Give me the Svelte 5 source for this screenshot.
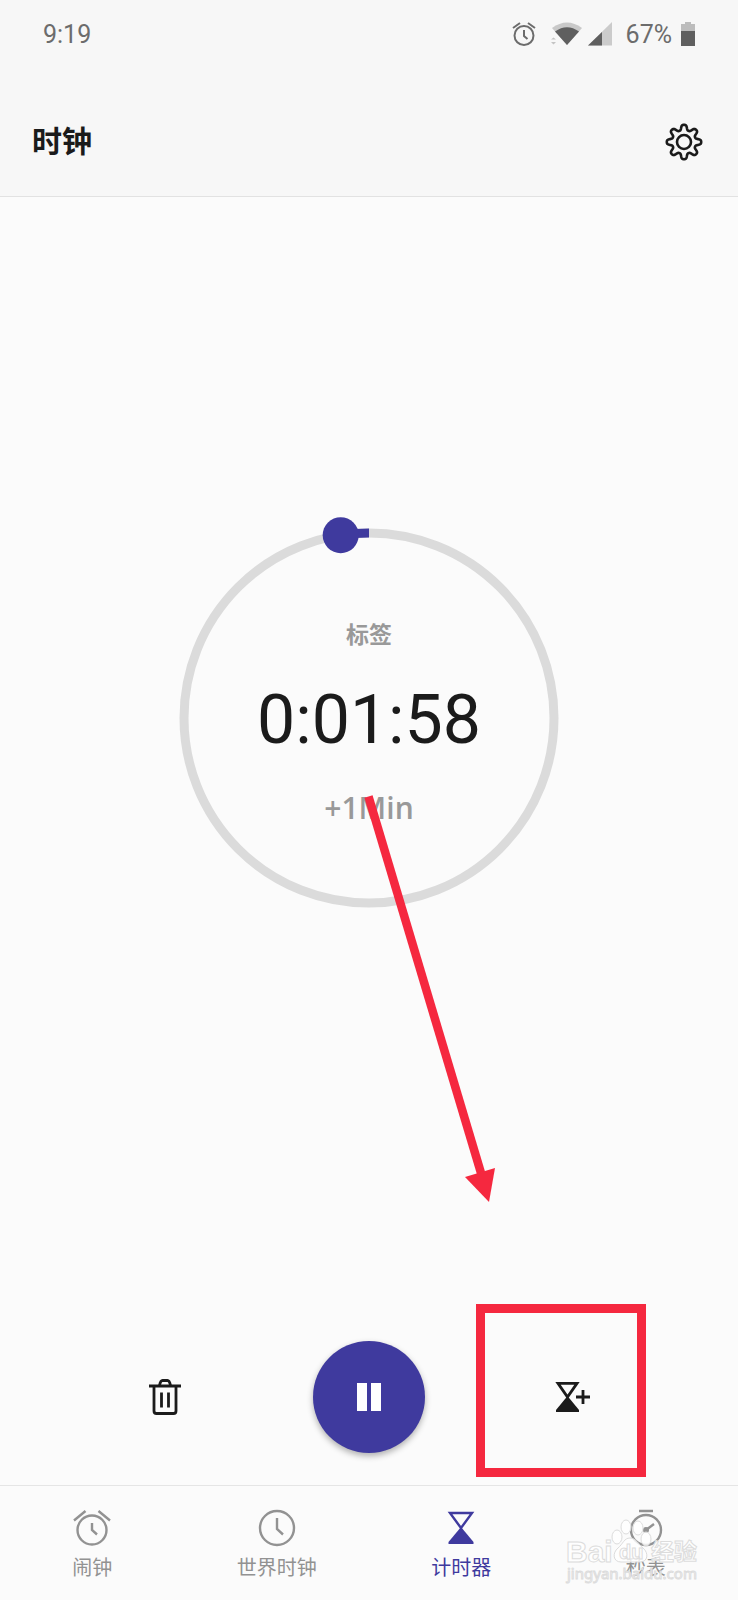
<script lang="ts">
  const tabs = [
    { id: 'alarm', label: '闹钟' },
    { id: 'world', label: '世界时钟' },
    { id: 'timer', label: '计时器' },
    { id: 'stopwatch', label: '秒表' },
  ]
  let active = $state('timer')
  let elapsed = 8.8
  let remaining = $state(118)

  // the knob travels anticlockwise from the top of the ring
  const R = 185
  const angle = (elapsed * Math.PI) / 180
  const knobX = 190 - R * Math.sin(angle)
  const knobY = 190 - R * Math.cos(angle)

  // eight rounded teeth
  const gear = Array.from({ length: 160 }, (_, i) => {
    const a = (i * Math.PI) / 80
    const r = 14.6 + (2.6 * Math.tanh(1.6 * Math.cos(8 * a))) / Math.tanh(1.6)
    return `${(r * Math.cos(a)).toFixed(2)},${(r * Math.sin(a)).toFixed(2)}`
  }).join(' ')

  const pad = (n: number) => String(n).padStart(2, '0')
  const time = $derived(
    `${Math.floor(remaining / 3600)}:${pad(Math.floor(remaining / 60) % 60)}:${pad(remaining % 60)}`
  )
</script>

<div class="screen">
  <div class="status">
    <span>9:19</span>
    <div class="status-icons">
      <svg class="s-alarm" width="24" height="24" viewBox="0 0 24 24" fill="none" stroke="#6c6c6c" stroke-width="2">
        <circle cx="12" cy="13.5" r="9.5" />
        <path d="M12 8v6l3.5 3M1 6l7-5M23 6l-7-5" />
      </svg>
      <svg class="s-wifi" width="34" height="24" viewBox="0 0 34 24">
        <path d="M2 6Q17-5 32 6L17 23z" fill="#c9c9c9" />
        <path d="M5 9.500Q17 1 29 9.500L17 23z" fill="#5f5f5f" />
        <path d="M1 17.500l2.500-2 2.500 2zM1 20h5l-2.500 2.500z" fill="#c4c4c4" />
      </svg>
      <svg class="s-signal" width="24" height="24" viewBox="0 0 24 24">
        <path d="M0 23.500L24 0v23.500z" fill="#cbcbcb" />
        <path d="M0 23.500L14 10v13.500z" fill="#5f5f5f" />
      </svg>
      <span class="percent">67%</span>
      <svg width="16" height="26" viewBox="0 0 16 26">
        <path d="M1 3h4V1h6v2h4v8H1z" fill="#bcbcbc" />
        <path d="M1 10h14v15H1z" fill="#5f5f5f" />
      </svg>
    </div>
  </div>

  <header>
    <h1>时钟</h1>
    <button class="icon" aria-label="设置">
      <svg width="38" height="38" viewBox="-19 -19 38 38" fill="none" stroke="#1b1b1b" stroke-width="2.600" stroke-linejoin="round">
        <circle r="7" />
        <polygon points={gear} />
      </svg>
    </button>
  </header>

  <main>
    <section class="dial-area">
      <div class="dial">
        <svg class="ring" viewBox="0 0 380 380" fill="none">
          <circle cx="190" cy="190" r={R} stroke="#dbdbdb" stroke-width="9" />
          <path d={`M190 5A${R} ${R} 0 0 0 ${knobX} ${knobY}`} stroke="#3f3a9e" stroke-width="9" />
          <circle cx={knobX} cy={knobY} r="18" fill="#3f3a9e" />
        </svg>
        <button class="tag">标签</button>
        <div class="time">{time}</div>
        <button class="plus" onclick={() => (remaining += 60)}>+1Min</button>
        <svg class="arrow" width="130" height="410" viewBox="0 0 130 410">
          <path d="M4.500 1.500L117 378" stroke="#f5283f" stroke-width="8.500" fill="none" />
          <path d="M101 382L131 373L125 407z" fill="#f5283f" />
        </svg>
      </div>
    </section>

    <section class="controls">
      <button class="round" aria-label="删除">
        <svg width="32" height="36" viewBox="0 0 32 36" fill="none" stroke="#1b1b1b" stroke-width="2.800">
          <path d="M0 7h32M5 7v25q0 2.500 2.500 2.500h17q2.500 0 2.500-2.500V7" />
          <path d="M10.500 6.500q1-5 3-5h5q2 0 3 5M12.500 13.500v15M19.500 13.500v15" />
        </svg>
      </button>
      <button class="round pause" aria-label="暂停">
        <svg width="24" height="28" viewBox="0 0 24 28" fill="#fff">
          <path d="M0 0h10v28H0zM14 0h10v28H14z" />
        </svg>
      </button>
      <button class="round add" aria-label="添加计时器">
        <svg width="36" height="32" viewBox="0 0 36 32" fill="none" stroke="#1b1b1b" stroke-width="2.800">
          <path d="M3 2.300h19L12.500 16z" />
          <path d="M12.500 15L1 29v2h23v-2z" fill="#1b1b1b" stroke="none" />
          <path d="M21 16h14M28 9v14" />
        </svg>
        <span class="mark"></span>
      </button>
    </section>
  </main>

  <nav>
    {#each tabs as tab}
      <button class="tab" class:active={active === tab.id} onclick={() => (active = tab.id)}>
        <svg width="40" height="38" viewBox="0 0 40 38" fill="none" stroke="currentColor" stroke-width="2.400">
          {#if tab.id === 'alarm'}
            <circle cx="20" cy="21" r="14.500" />
            <path d="M20 14v7l5 4.500M2 11.500L13.500 2M38 11.500L26.500 2" />
          {:else if tab.id === 'world'}
            <circle cx="20" cy="19" r="17" />
            <path d="M20 9v11l6 5.500" />
          {:else if tab.id === 'timer'}
            <path d="M9 4h22L20 19z" />
            <path d="M20 18L7.500 33v2h25v-2z" fill="currentColor" stroke="none" />
          {:else}
            <circle cx="20" cy="21" r="15" />
            <path d="M13 2h14M20 21l8-6" />
            <circle cx="20" cy="21" r="3" fill="currentColor" stroke="none" />
          {/if}
        </svg>
        <span>{tab.label}</span>
      </button>
    {/each}
    <svg class="watermark" width="140" height="70" viewBox="0 0 140 70">
      <g fill="#fff" fill-opacity="0.800" stroke="#dcdcdc" stroke-width="1">
        <ellipse cx="56" cy="21" rx="5" ry="7" />
        <ellipse cx="65" cy="11" rx="5" ry="7" />
        <ellipse cx="77" cy="12" rx="5" ry="7" />
        <ellipse cx="85" cy="23" rx="5" ry="7" />
        <path d="M69 22c6 0 8 6 13 10 6 5 5 14-3 14H60c-8 0-9-9-3-14 5-4 6-10 12-10z" />
        <text x="5" y="46" class="wm-latin">Bai</text>
        <text x="58" y="43" class="wm-du">du</text>
        <text x="90" y="44" class="wm-cjk">经验</text>
        <text x="6" y="63" class="wm-url">jingyan.baidu.com</text>
      </g>
    </svg>
  </nav>
</div>

<style>
  :global(body) {
    background: #fbfbfb;
  }

  .screen {
    min-height: 100vh;
    display: flex;
    flex-direction: column;
    font-family: Roboto, "Noto Sans CJK SC", sans-serif;
    color: #1b1b1b;
  }

  button {
    border: 0;
    padding: 0;
    background: none;
    color: inherit;
    font-family: inherit;
    cursor: pointer;
  }

  svg {
    display: block;
  }

  .status {
    height: 68px;
    padding: 0 42px 0 43px;
    display: flex;
    align-items: center;
    justify-content: space-between;
    background: #f7f7f7;
    color: #6c6c6c;
    font-size: 25px;
  }

  .status-icons {
    display: flex;
    align-items: center;
  }

  .s-alarm {
    margin-right: 14px;
  }

  .s-wifi {
    margin-right: 4px;
  }

  .percent {
    margin: 0 8px 0 14px;
  }

  header {
    height: 129px;
    padding: 20px 35px 0 32px;
    display: flex;
    align-items: center;
    justify-content: space-between;
    box-sizing: border-box;
    background: #f7f7f7;
    border-bottom: 1px solid #e2e2e2;
  }

  h1 {
    margin: 0;
    font-size: 30px;
    line-height: 40px;
    font-weight: 700;
  }

  main {
    flex: 1;
    display: flex;
    flex-direction: column;
  }

  .dial-area {
    flex: 1;
    display: flex;
    align-items: center;
    justify-content: center;
    padding-bottom: 102px;
  }

  .dial {
    position: relative;
    width: 380px;
    height: 380px;
    padding-top: 8px;
    box-sizing: border-box;
    display: flex;
    flex-direction: column;
    align-items: center;
    justify-content: center;
    gap: 24px;
  }

  .ring {
    position: absolute;
    inset: 0;
    overflow: visible;
  }

  .tag,
  .plus {
    z-index: 1;
    color: #999;
    line-height: 40px;
  }

  .tag {
    font-size: 23px;
    font-weight: 700;
  }

  .time {
    font-size: 68px;
    line-height: 80px;
  }

  .plus {
    margin-top: 4px;
    font-family: "Open Sans", "Noto Sans", sans-serif;
    font-size: 30px;
    font-weight: 600;
  }

  .arrow {
    position: absolute;
    z-index: 2;
    left: 185px;
    top: 267px;
    overflow: visible;
    pointer-events: none;
  }

  .controls {
    display: flex;
    justify-content: center;
    gap: 92px;
    padding-bottom: 32px;
  }

  .round {
    position: relative;
    width: 112px;
    height: 112px;
    border-radius: 50%;
    display: flex;
    align-items: center;
    justify-content: center;
  }

  .pause {
    background: #3f3a9e;
    box-shadow: 0 3px 6px rgba(0, 0, 0, 0.3);
  }

  .mark {
    position: absolute;
    left: -41px;
    top: -37px;
    width: 170px;
    height: 173px;
    box-sizing: border-box;
    border: 9px solid #f5283f;
  }

  nav {
    position: relative;
    display: grid;
    grid-template-columns: repeat(4, 1fr);
    border-top: 1px solid #e5e5e5;
  }

  .tab {
    display: flex;
    flex-direction: column;
    align-items: center;
    gap: 6px;
    padding: 23px 0 17px;
    color: #929292;
    font-size: 20px;
    line-height: 30px;
  }

  .active {
    color: #3f3a9e;
  }

  .watermark {
    position: absolute;
    right: 37px;
    bottom: 14px;
    pointer-events: none;
  }

  .wm-latin {
    font: 700 30px "Liberation Sans", sans-serif;
  }

  .wm-du {
    font: 700 20px "Liberation Sans", sans-serif;
  }

  .wm-cjk {
    font: 700 23px "Noto Sans CJK SC", sans-serif;
  }

  .wm-url {
    font: 400 15px "Noto Sans", sans-serif;
  }
</style>
